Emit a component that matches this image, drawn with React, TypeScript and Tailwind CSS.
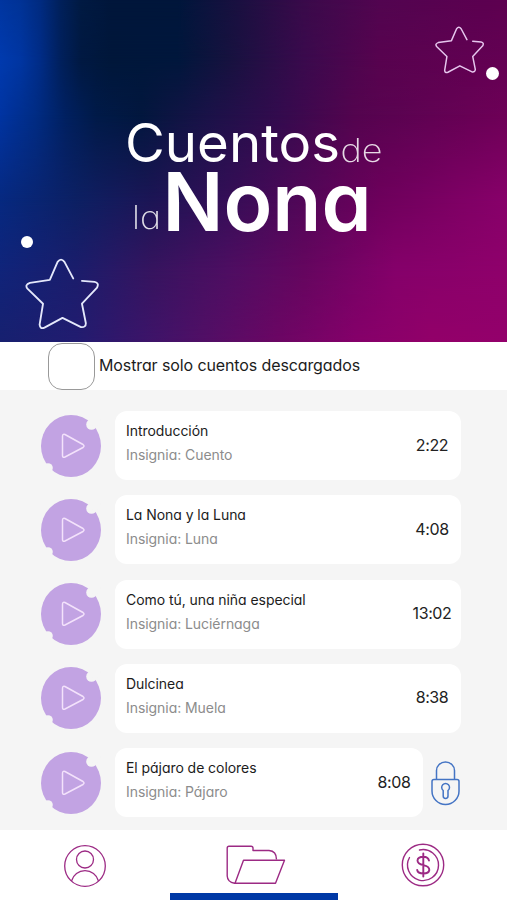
import clsx from "clsx";

interface Story {
  title: string;
  badge: string;
  duration: string;
  locked?: boolean;
}

const stories: Story[] = [
  { title: "Introducción", badge: "Cuento", duration: "2:22" },
  { title: "La Nona y la Luna", badge: "Luna", duration: "4:08" },
  { title: "Como tú, una niña especial", badge: "Luciérnaga", duration: "13:02" },
  { title: "Dulcinea", badge: "Muela", duration: "8:38" },
  { title: "El pájaro de colores", badge: "Pájaro", duration: "8:08", locked: true },
];

function Backdrop() {
  // each band fades in over the previous one, top to bottom
  return (
    <>
      <div className="absolute inset-0 bg-[linear-gradient(90deg,#0036a0_0%,#003396_4%,#002b80_8%,#00205a_12%,#001a42_16%,#00163b_22%,#00163b_35%,#1a1040_47%,#3a0a4a_60%,#520550_75%,#5e0050_100%)]" />
      <div className="absolute inset-0 bg-[linear-gradient(90deg,#003aae_0%,#0036a2_4%,#002c86_8%,#00205c_12%,#001942_16%,#00173a_22%,#00173c_35%,#16123f_45%,#3a0a4d_60%,#58034f_75%,#640053_100%)] [mask-image:linear-gradient(180deg,transparent_0px,black_60px)]" />
      <div className="absolute inset-0 bg-[linear-gradient(90deg,#0034a2_0%,#002c84_7%,#002060_13%,#001a48_19%,#02173e_28%,#1a1248_41%,#330b4e_55%,#54044f_70%,#6e0057_100%)] [mask-image:linear-gradient(180deg,transparent_60px,black_115px)]" />
      <div className="absolute inset-0 bg-[linear-gradient(90deg,#062980_0%,#0c2063_15%,#1c1555_30%,#350e57_45%,#520758_60%,#6e005c_75%,#88006a_100%)] [mask-image:linear-gradient(180deg,transparent_115px,black_200px)]" />
      <div className="absolute inset-0 bg-[linear-gradient(90deg,#10247a_0%,#1b1d6c_15%,#36145f_30%,#4e0e62_45%,#65065f_60%,#85006a_78%,#8f006b_100%)] [mask-image:linear-gradient(180deg,transparent_200px,black_270px)]" />
      <div className="absolute inset-0 bg-[linear-gradient(90deg,#17206f_0%,#221c70_15%,#35166b_25%,#510f66_40%,#6c0664_55%,#85006a_70%,#920069_85%,#93006b_100%)] [mask-image:linear-gradient(180deg,transparent_270px,black_342px)]" />
    </>
  );
}

function Star({ className, strokeWidth }: { className: string; strokeWidth: number }) {
  return (
    <svg
      viewBox="0 0 76 73"
      fill="none"
      stroke="currentColor"
      strokeWidth={strokeWidth}
      strokeLinecap="round"
      strokeLinejoin="round"
      className={className}
    >
      <path d="M49.500 20.500 40.500 3.500Q37-1 33.500 3.500L25.500 22 5 25Q-.5 27 2.500 31L18.500 46.500 15 68Q15.500 73 20 71L38.500 61 57.500 70.500Q62.500 71 62.500 66.500L58.500 46.500 74 30Q76.500 25 71.500 24L58.500 23" />
    </svg>
  );
}

function Logo() {
  return (
    <svg viewBox="0 0 290 140" className="absolute left-[110px] top-[105px] h-[140px] w-[290px] overflow-visible fill-white">
      <text x="15" y="56.500" fontSize="53" textLength="215" lengthAdjust="spacingAndGlyphs">
        Cuentos
      </text>
      <text x="230.500" y="57" fontSize="33" fontWeight="200" textLength="42" lengthAdjust="spacingAndGlyphs" opacity=".85">
        de
      </text>
      <text x="22" y="124" fontSize="33" fontWeight="200" textLength="29" lengthAdjust="spacingAndGlyphs" opacity=".85">
        la
      </text>
      <text x="52.500" y="125.500" fontSize="81" fontWeight="600" textLength="209" lengthAdjust="spacingAndGlyphs">
        Nona
      </text>
    </svg>
  );
}

function PlayBadge() {
  return (
    <svg viewBox="0 0 60 62" className="h-[62px] w-[60px] shrink-0">
      <ellipse cx="30" cy="31" rx="30" ry="31" fill="#c2a3e3" />
      <circle cx="50.500" cy="9.500" r="5.300" fill="#f5f5f5" />
      <circle cx="54" cy="5" r="6" fill="#f5f5f5" />
      <circle cx="7" cy="53" r="4.800" fill="#f5f5f5" />
      <circle cx="3" cy="56" r="7" fill="#f5f5f5" />
      <path
        d="M21.500 21.500V40.500Q21.500 43 24 42L42 32.500Q44 31 42 29.500L24 19.500Q21.500 18.500 21.500 21.500Z"
        fill="none"
        stroke="#f3e2fb"
        strokeWidth="1.500"
      />
    </svg>
  );
}

function Lock() {
  return (
    <svg viewBox="0 0 29 45" fill="none" stroke="#4474c4" strokeWidth="1.500" className="ml-2 mt-[2px] h-[45px] w-[29px]">
      <path d="M5.500 18.500V9.500a9 8.500 0 0 1 18 0V18.500" />
      <path d="M3 18.500H26Q28 18.500 28 20.500V30a13.500 13.500 0 0 1-27 0V20.500Q1 18.500 3 18.500Z" />
      <path d="M12.200 29.500a3.900 3.900 0 1 1 4.800 0V35a2.400 2.400 0 0 1-4.800 0Z" />
    </svg>
  );
}

function StoryRow({ title, badge, duration, locked }: Story) {
  return (
    <li className="flex h-[69px] items-center pl-[41px]">
      <PlayBadge />
      <div
        className={clsx(
          "ml-[14px] flex h-full items-center justify-between rounded-xl bg-white pl-[11px] pr-[9px]",
          locked ? "w-[308px]" : "w-[346px]"
        )}
      >
        <div className="-mt-[5px] text-[14px] leading-6 tracking-[-0.06px]">
          <h3 className="text-[#1c1c1c]">{title}</h3>
          <p className="text-[#8c8c8c]">Insignia: {badge}</p>
        </div>
        <span className="-mt-[2px] w-10 text-center text-[16px] tracking-[-0.4px] text-[#222]">{duration}</span>
      </div>
      {locked && <Lock />}
    </li>
  );
}

function NavBar() {
  return (
    <nav className="relative flex h-[70px] items-start bg-white text-[#9c2a84]">
      <svg viewBox="0 0 42 42" fill="none" stroke="currentColor" strokeWidth="1.300" className="ml-16 mt-[15px] size-[42px]">
        <circle cx="21" cy="21" r="20.300" />
        <circle cx="21" cy="14.500" r="8.500" />
        <path d="M7.500 36a14 14 0 0 1 27 0" />
      </svg>
      <svg viewBox="0 0 60 40" fill="none" stroke="currentColor" strokeWidth="1.400" strokeLinejoin="round" className="ml-[120px] mt-[15px] h-[40px] w-[60px]">
        <path d="M9.500 38.300H8.500Q1.500 37 1.200 31V3Q1.200 1.200 3 1.200H25Q27 1.200 27 3V5.500H43Q50.500 6 50.500 14.500" />
        <path d="M17.500 15.200H58.500L49.500 38.300H9Z" />
      </svg>
      <svg viewBox="0 0 44 44" fill="none" stroke="currentColor" strokeWidth="1.400" strokeLinecap="round" className="ml-[115px] mt-[13px] size-[44px]">
        <circle cx="22" cy="22" r="20.700" />
        <path d="M18.500 7A15.500 15.500 0 1 1 8.500 14.500" />
        <path d="M28 17.500Q27 14 22.500 13.800 16.800 13.800 16.500 17.500 16.500 20.700 22.500 22.200 28.500 23.700 28.300 27 27.800 30.500 22.500 30.500 16.800 30.500 16.200 27M22.300 10.500V33.500" strokeWidth="1.900" />
      </svg>
      <div className="absolute bottom-0 left-[170px] h-[7px] w-[168px] bg-[#0039a6]" />
    </nav>
  );
}

export default function App() {
  return (
    <div className="flex h-[900px] w-[507px] flex-col overflow-hidden bg-white font-['Inter','Open_Sans',sans-serif] [font-feature-settings:'cv11']">
      <header className="relative h-[342px] shrink-0 overflow-hidden">
        <Backdrop />
        <Star className="absolute left-[435px] top-[26px] h-[48px] w-[49px] text-[#e6c6ee]" strokeWidth={2.3} />
        <div className="absolute left-[486px] top-[67px] size-[13px] rounded-full bg-white" />
        <Logo />
        <div className="absolute left-[21px] top-[236px] size-3 rounded-full bg-white" />
        <Star className="absolute left-[25px] top-[258px] h-[72px] w-[74px] text-[#e4e8fb]" strokeWidth={1.9} />
      </header>

      <label className="flex h-[48px] shrink-0 items-center pl-12">
        <span className="h-[47px] w-[47px] rounded-[14px] border border-[#999] bg-white" />
        <span className="-mt-[2px] ml-1 text-[16px] tracking-[-0.11px] text-[#1c1c1c]">
          Mostrar solo cuentos descargados
        </span>
      </label>

      <ul className="flex h-[440px] shrink-0 flex-col gap-[15.3px] bg-[#f5f5f5] pt-[21px]">
        {stories.map((story) => (
          <StoryRow key={story.title} {...story} />
        ))}
      </ul>

      <NavBar />
    </div>
  );
}
